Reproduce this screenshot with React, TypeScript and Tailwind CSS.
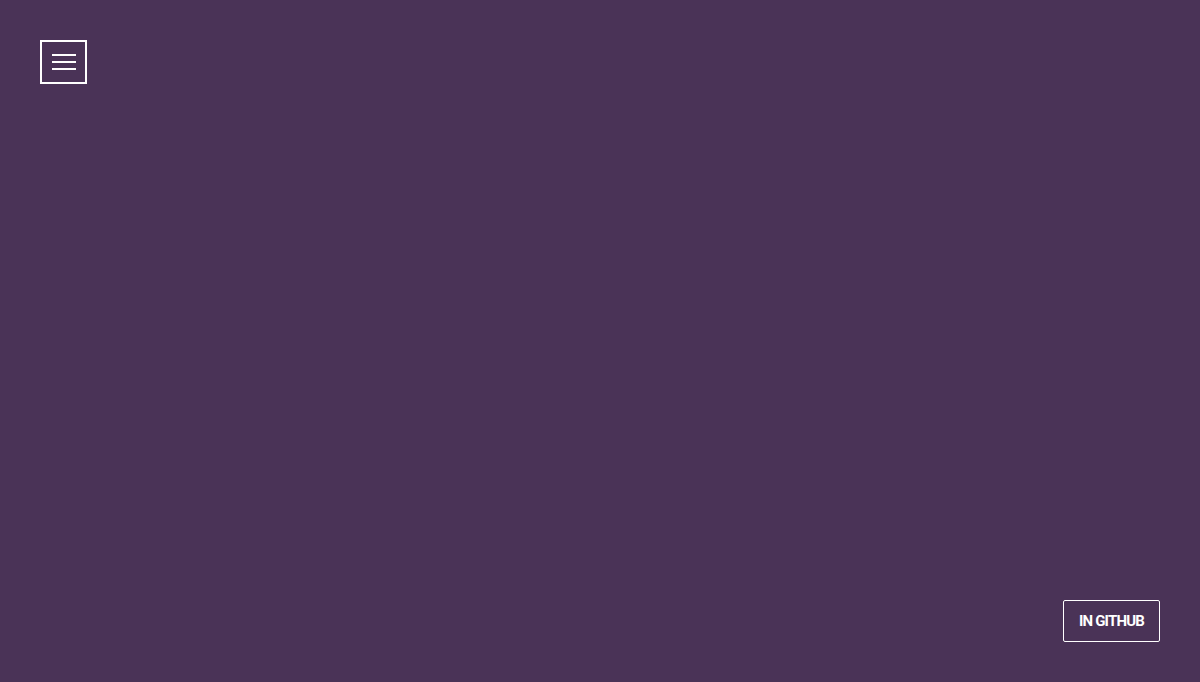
import React from 'react';

const App = () => {
  return (
    <div className="h-[682px] w-full bg-[#4a3357] flex flex-col justify-between p-10" style={{ fontFamily: 'Roboto, "Liberation Sans", sans-serif' }}>
      <div>
        <button className="w-[47px] h-[44px] border-2 border-white flex flex-col items-center justify-center gap-[5px]">
          <span className="block w-6 h-[2px] bg-white" />
          <span className="block w-6 h-[2px] bg-white" />
          <span className="block w-6 h-[2px] bg-white" />
        </button>
      </div>
      <div className="flex justify-end">
        <a className="h-[42px] w-[97px] border border-white rounded-[2px] flex items-center justify-center text-white text-[15px] font-bold tracking-[-0.8px] uppercase pt-[1px]">
          In Github
        </a>
      </div>
    </div>
  );
};

export default App;
